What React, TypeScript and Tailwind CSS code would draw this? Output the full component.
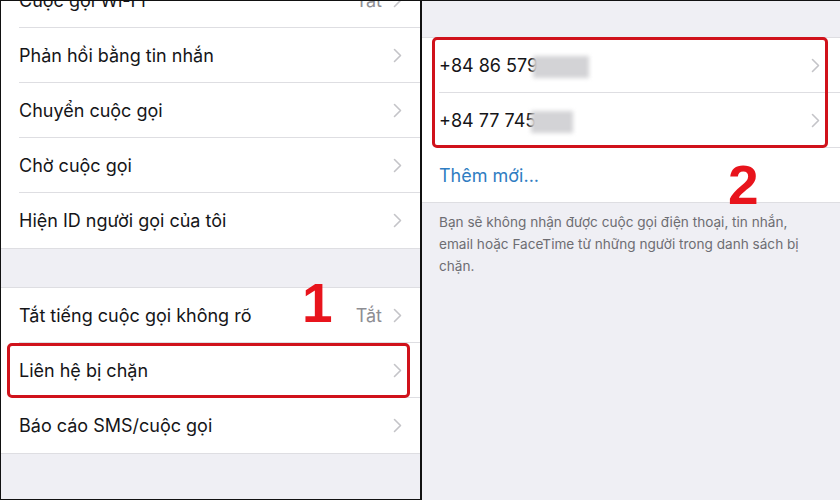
import React from "react";

const Chevron = () => (
  <svg width="9" height="15" viewBox="0 0 9 15" fill="none" className="shrink-0">
    <path d="M1.5 1.5 L7.5 7.5 L1.5 13.5" stroke="#c4c4c8" strokeWidth="1.6" strokeLinecap="round" strokeLinejoin="round" />
  </svg>
);

function Row({ label, value, last }: { label: string; value?: string; last?: boolean }) {
  return (
    <div className="h-[55px] pl-[18px] bg-white">
      <div
        className={
          "flex h-full items-center justify-between pr-[18px] " +
          (last ? "" : "border-b border-[#dedee2]")
        }
      >
        <span className="text-[18px] text-[#151518]">{label}</span>
        <div className="flex items-center gap-[11px]">
          {value && <span className="text-[18px] text-[#8e8e93]">{value}</span>}
          <Chevron />
        </div>
      </div>
    </div>
  );
}

const Blur = ({ w }: { w: number }) => (
  <span
    className="inline-block h-[22px] -ml-[5px] align-middle bg-[#d3d3d6] blur-[2px]"
    style={{ width: w }}
  />
);

export default function App() {
  return (
    <div
      className="flex w-[840px] h-[500px] overflow-hidden bg-white"
      style={{ fontFamily: "Inter, 'Noto Sans', sans-serif" }}
    >
      {/* Left panel */}
      <div className="relative w-[422px] h-[500px] shrink-0 overflow-hidden border-l border-t border-b border-r-2 border-[#111] bg-[#efeff4]">
        <div className="-mt-[28px]">
          <Row label="Cuộc gọi Wi-Fi" value="Tắt" />
          <Row label="Phản hồi bằng tin nhắn" />
          <Row label="Chuyển cuộc gọi" />
          <Row label="Chờ cuộc gọi" />
          <Row label="Hiện ID người gọi của tôi" last />
          <div className="h-[39px] border-t border-[#dedee2]" />
          <div className="border-t border-[#dedee2]">
            <Row label="Tắt tiếng cuộc gọi không rõ" value="Tắt" />
            <div className="relative">
              <Row label="Liên hệ bị chặn" />
              <div className="absolute left-[6px] right-[10px] top-0 bottom-0 rounded-[5px] border-[3px] border-[#d0121b]" />
            </div>
            <Row label="Báo cáo SMS/cuộc gọi" last />
          </div>
          <div className="border-t border-[#dedee2]" />
        </div>
        <span
          className="absolute left-[301px] top-[275px] text-[55px] font-bold leading-none text-[#e8141c]"
          style={{ fontFamily: "'Liberation Sans', Arial, sans-serif" }}
        >
          1
        </span>
      </div>

      {/* Right panel */}
      <div className="relative flex-1 h-[500px] border-t border-[#111] bg-[#efeff4]">
        <div className="h-[36px]" />
        <div className="bg-white border-t border-b border-[#dedee2]">
          <div className="relative">
            <div className="h-[55px] pl-[17px]">
              <div className="flex h-full items-center justify-between pr-[20px] border-b border-[#dedee2]">
                <span className="text-[18px] text-[#151518] whitespace-nowrap">
                  +84 86 579<Blur w={56} />
                </span>
                <Chevron />
              </div>
            </div>
            <div className="h-[55px] pl-[17px]">
              <div className="flex h-full items-center justify-between pr-[20px] border-b border-[#dedee2]">
                <span className="text-[18px] text-[#151518] whitespace-nowrap">
                  +84 77 745<Blur w={42} />
                </span>
                <Chevron />
              </div>
            </div>
            <div className="absolute left-[10px] right-[12px] -top-[1px] bottom-0 rounded-[5px] border-[3px] border-[#d0121b]" />
          </div>
          <div className="h-[54px] pl-[17px] flex items-center">
            <span className="text-[18px] text-[#2f7dc2]">Thêm mới...</span>
          </div>
        </div>
        <div className="pl-[17px] pt-[8px] text-[13.6px] leading-[22px] text-[#6d6d72]">
          <div className="whitespace-nowrap">Bạn sẽ không nhận được cuộc gọi điện thoại, tin nhắn,</div>
          <div className="whitespace-nowrap">email hoặc FaceTime từ những người trong danh sách bị</div>
          <div className="whitespace-nowrap">chặn.</div>
        </div>
        <span
          className="absolute left-[306px] top-[157px] text-[55px] font-bold leading-none text-[#e8141c]"
          style={{ fontFamily: "'Liberation Sans', Arial, sans-serif" }}
        >
          2
        </span>
      </div>
    </div>
  );
}
